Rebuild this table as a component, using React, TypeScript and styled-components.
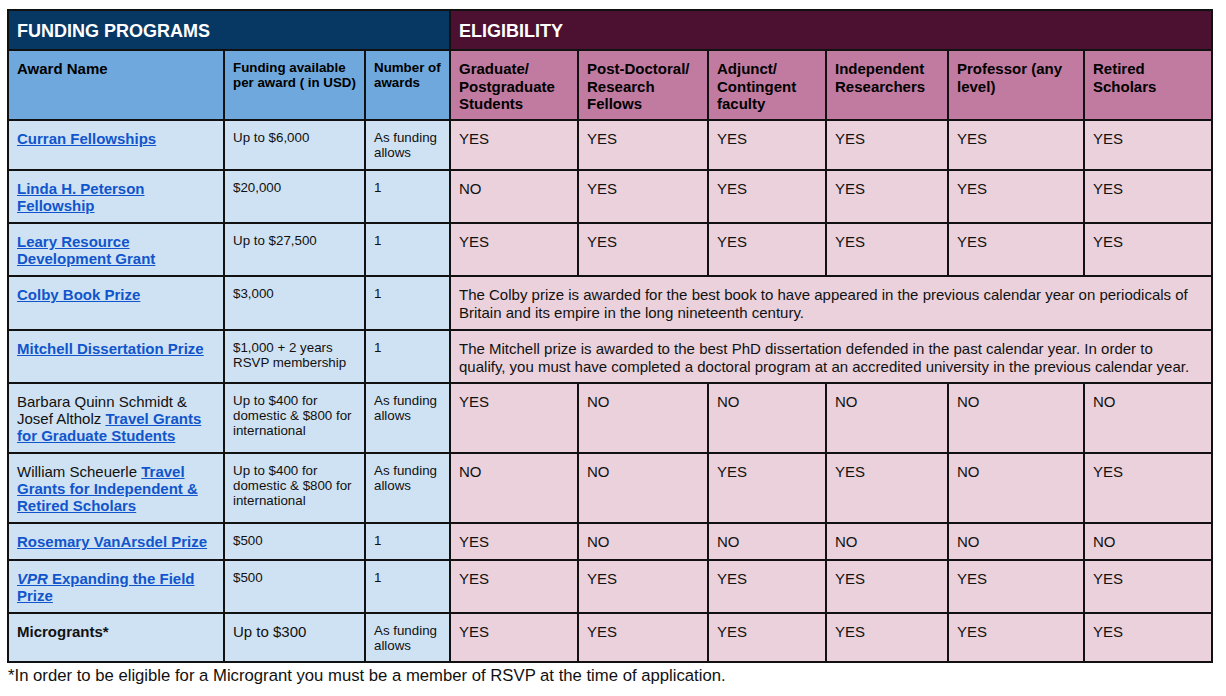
import React from "react";
import styled, { createGlobalStyle } from "styled-components";

const GlobalStyle = createGlobalStyle`
  html, body {
    margin: 0;
    padding: 0;
    background: #ffffff;
  }
  body {
    font-family: "Liberation Sans", Arial, sans-serif;
    color: #000;
  }
`;

const COLORS = {
  navy: "#073763",
  wine: "#4c1130",
  blueHead: "#6fa8dc",
  pinkHead: "#c27ba0",
  blueCell: "#cfe2f3",
  pinkCell: "#ead1dc",
  link: "#1155cc",
};

const Page = styled.div`
  padding: 9px 0 0 7px;
`;

const Table = styled.table`
  border-collapse: collapse;
  table-layout: fixed;
  width: 1206px;
`;

const Row = styled.tr<{ $h: number }>`
  height: ${(p) => p.$h}px;
`;

const GroupHead = styled.th<{ $bg: string }>`
  background: ${(p) => p.$bg};
  color: #fff;
  font-size: 18px;
  font-weight: 700;
  text-align: left;
  vertical-align: middle;
  padding: 2px 8px 0;
  border: 2px solid #111;
`;

const ColHead = styled.th<{ $bg: string; $small?: boolean }>`
  background: ${(p) => p.$bg};
  font-size: ${(p) => (p.$small ? "13.33px" : "15px")};
  line-height: ${(p) => (p.$small ? "15px" : "17.5px")};
  font-weight: 700;
  text-align: left;
  vertical-align: top;
  padding: 9px 8px 0 8px;
  border: 2px solid #111;
`;

const Cell = styled.td<{ $bg: string; $size?: number; $note?: boolean }>`
  background: ${(p) => p.$bg};
  font-size: ${(p) => p.$size ?? 15}px;
  line-height: ${(p) => ((p.$size ?? 15) < 14 ? 15 : p.$note ? 18 : 17)}px;
  text-align: left;
  vertical-align: top;
  padding: 9px 8px 0 8px;
  border: 2px solid #111;
  color: #111;
`;

const Award = styled.a`
  color: ${COLORS.link};
  font-weight: 700;
  text-decoration: underline;
  text-underline-offset: 1px;
`;

const Strong = styled.span`
  font-weight: 700;
`;

const Footnote = styled.p`
  margin: 3px 0 0 1px;
  font-size: 16.7px;
  color: #111;
`;

type RowData = {
  name: React.ReactNode;
  funding: string;
  fundingSize?: number;
  count: string;
  elig?: string[];
  note?: string;
  h: number;
};

const Y = "YES";
const N = "NO";

const rows: RowData[] = [
  {
    name: <Award href="#">Curran Fellowships</Award>,
    funding: "Up to $6,000",
    count: "As funding allows",
    elig: [Y, Y, Y, Y, Y, Y],
    h: 50,
  },
  {
    name: <Award href="#">Linda H. Peterson Fellowship</Award>,
    funding: "$20,000",
    count: "1",
    elig: [N, Y, Y, Y, Y, Y],
    h: 53,
  },
  {
    name: <Award href="#">Leary Resource Development Grant</Award>,
    funding: "Up to $27,500",
    count: "1",
    elig: [Y, Y, Y, Y, Y, Y],
    h: 53,
  },
  {
    name: <Award href="#">Colby Book Prize</Award>,
    funding: "$3,000",
    count: "1",
    note:
      "The Colby prize is awarded for the best book to have appeared in the previous calendar year on periodicals of Britain and its empire in the long nineteenth century.",
    h: 54,
  },
  {
    name: <Award href="#">Mitchell Dissertation Prize</Award>,
    funding: "$1,000 + 2 years RSVP membership",
    count: "1",
    note:
      "The Mitchell prize is awarded to the best PhD dissertation defended in the past calendar year. In order to qualify, you must have completed a doctoral program at an accredited university in the previous calendar year.",
    h: 53,
  },
  {
    name: (
      <>
        Barbara Quinn Schmidt &amp; Josef Altholz{" "}
        <Award href="#">Travel Grants for Graduate Students</Award>
      </>
    ),
    funding: "Up to $400 for domestic & $800 for international",
    count: "As funding allows",
    elig: [Y, N, N, N, N, N],
    h: 70,
  },
  {
    name: (
      <>
        William Scheuerle{" "}
        <Award href="#">Travel Grants for Independent &amp; Retired Scholars</Award>
      </>
    ),
    funding: "Up to $400 for domestic & $800 for international",
    count: "As funding allows",
    elig: [N, N, Y, Y, N, Y],
    h: 70,
  },
  {
    name: <Award href="#">Rosemary VanArsdel Prize</Award>,
    funding: "$500",
    count: "1",
    elig: [Y, N, N, N, N, N],
    h: 37,
  },
  {
    name: (
      <Award href="#">
        <i>VPR</i> Expanding the Field Prize
      </Award>
    ),
    funding: "$500",
    count: "1",
    elig: [Y, Y, Y, Y, Y, Y],
    h: 53,
  },
  {
    name: <Strong>Microgrants*</Strong>,
    funding: "Up to $300",
    fundingSize: 15,
    count: "As funding allows",
    elig: [Y, Y, Y, Y, Y, Y],
    h: 49,
  },
];

const eligHeads = [
  "Graduate/ Postgraduate Students",
  "Post-Doctoral/ Research Fellows",
  "Adjunct/ Contingent faculty",
  "Independent Researchers",
  "Professor (any level)",
  "Retired Scholars",
];

const colWidths = [216, 141, 85, 128, 130, 118, 122, 136, 128];

export default function App() {
  return (
    <>
      <GlobalStyle />
      <Page>
        <Table>
          <colgroup>
            {colWidths.map((w, i) => (
              <col key={i} style={{ width: w }} />
            ))}
          </colgroup>
          <thead>
            <Row $h={40}>
              <GroupHead $bg={COLORS.navy} colSpan={3}>
                FUNDING PROGRAMS
              </GroupHead>
              <GroupHead $bg={COLORS.wine} colSpan={6}>
                ELIGIBILITY
              </GroupHead>
            </Row>
            <Row $h={70}>
              <ColHead $bg={COLORS.blueHead}>Award Name</ColHead>
              <ColHead $bg={COLORS.blueHead} $small>
                Funding available per award ( in USD)
              </ColHead>
              <ColHead $bg={COLORS.blueHead} $small>
                Number of awards
              </ColHead>
              {eligHeads.map((h) => (
                <ColHead key={h} $bg={COLORS.pinkHead}>
                  {h}
                </ColHead>
              ))}
            </Row>
          </thead>
          <tbody>
            {rows.map((r, i) => (
              <Row key={i} $h={r.h}>
                <Cell $bg={COLORS.blueCell}>{r.name}</Cell>
                <Cell $bg={COLORS.blueCell} $size={r.fundingSize ?? 13.33}>
                  {r.funding}
                </Cell>
                <Cell $bg={COLORS.blueCell} $size={13.33}>
                  {r.count}
                </Cell>
                {r.note ? (
                  <Cell $bg={COLORS.pinkCell} $note colSpan={6}>
                    {r.note}
                  </Cell>
                ) : (
                  r.elig!.map((e, j) => (
                    <Cell key={j} $bg={COLORS.pinkCell}>
                      {e}
                    </Cell>
                  ))
                )}
              </Row>
            ))}
          </tbody>
        </Table>
        <Footnote>
          *In order to be eligible for a Microgrant you must be a member of RSVP at the time of
          application.
        </Footnote>
      </Page>
    </>
  );
}
